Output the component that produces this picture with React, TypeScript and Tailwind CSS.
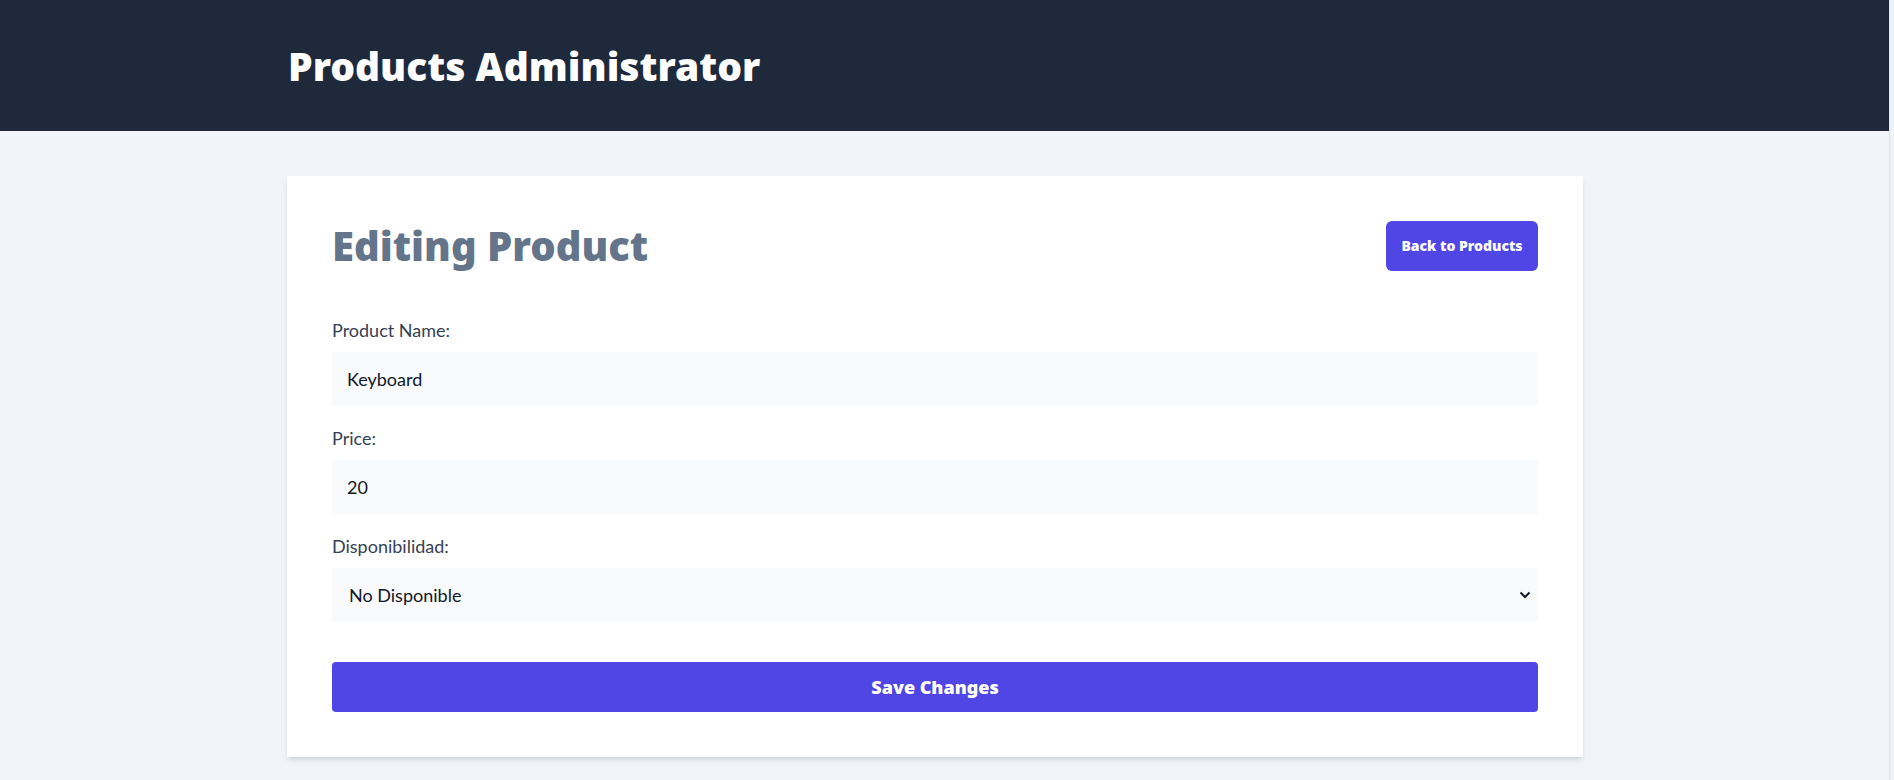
import React from "react";

const fieldLabel = "block text-lg leading-7 text-gray-700 mb-2";
const fieldInput = "w-full h-[54px] bg-[#f8fafc] px-[15px] text-lg text-gray-900 outline-none";
const heavy = "font-['Noto_Sans','Open_Sans',sans-serif] font-black";

function Field({ label, value, type = "text" }: { label: string; value: string; type?: string }) {
  return (
    <div>
      <label className={fieldLabel}>{label}</label>
      <input type={type} defaultValue={value} className={fieldInput} />
    </div>
  );
}

export default function App() {
  return (
    <div className="min-h-screen flex bg-[#f1f5f9] font-['Lato','Liberation_Sans',sans-serif]">
      <div className="flex-1">
        {/* Top bar */}
        <header className="h-[131px] bg-[#1e293b] flex items-center">
          <h1 className={`ml-[288px] text-[39px] leading-10 text-white ${heavy}`}>Products Administrator</h1>
        </header>

        <main className="ml-[287px] w-[1296px] mt-[45px] bg-white shadow-md px-[45px] pt-[45px] pb-[45px]">
          <div className="flex items-center justify-between h-[50px]">
            <h2 className={`text-[40px] text-[#64748b] leading-none ${heavy}`}>Editing Product</h2>
            <button className={`w-[152px] h-[50px] rounded-md bg-[#4f46e5] text-sm text-white ${heavy}`}>
              Back to Products
            </button>
          </div>

          <form className="mt-[45px] flex flex-col gap-[18px]">
            <Field label="Product Name:" value="Keyboard" />
            <Field label="Price:" value="20" type="number" />
            <div>
              <label className={fieldLabel}>Disponibilidad:</label>
              <div className="relative">
                <select
                  defaultValue="false"
                  className="w-full h-[54px] appearance-none bg-[#f8fafc] pl-[17px] pr-10 text-lg text-gray-900 outline-none"
                >
                  <option value="true">Disponible</option>
                  <option value="false">No Disponible</option>
                </select>
                <svg
                  className="absolute right-[7px] top-1/2 -translate-y-1/2 pointer-events-none"
                  width="12"
                  height="8"
                  viewBox="0 0 12 8"
                  fill="none"
                  stroke="#111827"
                  strokeWidth="2"
                >
                  <path d="M1.5 1.5L6 6L10.5 1.5" />
                </svg>
              </div>
            </div>

            <button
              type="button"
              className={`mt-[22px] w-full h-[50px] rounded bg-[#4f46e5] text-lg text-white ${heavy}`}
            >
              Save Changes
            </button>
          </form>
        </main>
      </div>
      <div className="w-[5px] bg-[#eef1f6] border-l border-[#e2e5ea]" />
    </div>
  );
}
